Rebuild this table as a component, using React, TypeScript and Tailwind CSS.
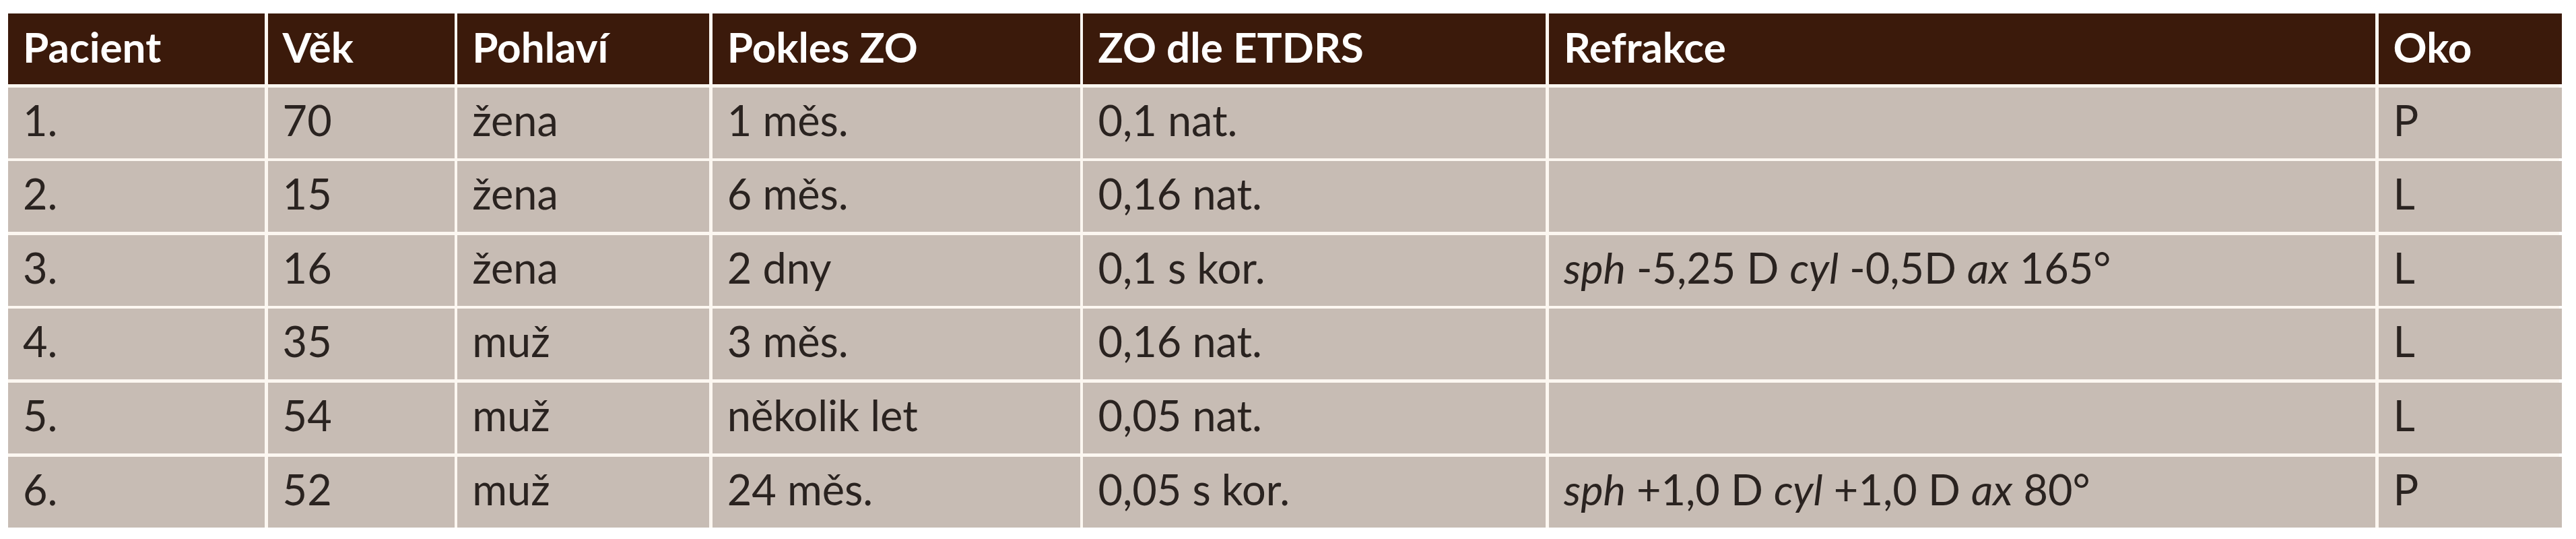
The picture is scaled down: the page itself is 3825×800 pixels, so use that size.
import React from 'react';

type Row = {
  pacient: string;
  vek: string;
  pohlavi: string;
  pokles: string;
  zo: string;
  refrakce: React.ReactNode;
  oko: string;
};

const headers = ['Pacient', 'Věk', 'Pohlaví', 'Pokles ZO', 'ZO dle ETDRS', 'Refrakce', 'Oko'];

const rows: Row[] = [
  { pacient: '1.', vek: '70', pohlavi: 'žena', pokles: '1 měs.', zo: '0,1 nat.', refrakce: '', oko: 'P' },
  { pacient: '2.', vek: '15', pohlavi: 'žena', pokles: '6 měs.', zo: '0,16 nat.', refrakce: '', oko: 'L' },
  {
    pacient: '3.',
    vek: '16',
    pohlavi: 'žena',
    pokles: '2 dny',
    zo: '0,1 s kor.',
    refrakce: (
      <>
        <i>sph</i> -5,25 D <i>cyl</i> -0,5D <i>ax</i> 165°
      </>
    ),
    oko: 'L',
  },
  { pacient: '4.', vek: '35', pohlavi: 'muž', pokles: '3 měs.', zo: '0,16 nat.', refrakce: '', oko: 'L' },
  { pacient: '5.', vek: '54', pohlavi: 'muž', pokles: 'několik let', zo: '0,05 nat.', refrakce: '', oko: 'L' },
  {
    pacient: '6.',
    vek: '52',
    pohlavi: 'muž',
    pokles: '24 měs.',
    zo: '0,05 s kor.',
    refrakce: (
      <>
        <i>sph</i> +1,0 D <i>cyl</i> +1,0 D <i>ax</i> 80°
      </>
    ),
    oko: 'P',
  },
];

const cell = 'h-[105px] pl-[22px] leading-[1.2] whitespace-nowrap';
const bodyCell = `${cell} pt-[10px] text-[63px] bg-[#c7bcb4] text-[#2a2320]`;

export default function App() {
  return (
    <div className="min-h-[800px] w-[3825px] bg-white pt-[20px] pl-[12px] font-['Lato','Noto_Sans',sans-serif]">
      {/* Table */}
      <div className="grid w-[3788px] grid-cols-[381px_277px_374px_546px_687px_1227px_272px] gap-[4.6px] bg-[#fcf7f1]">
        {headers.map((h) => (
          <div key={h} className={`${cell} pt-[12px] text-[62px] bg-[#3b1a0b] font-bold text-white`}>
            {h}
          </div>
        ))}
        {rows.map((r) => (
          <React.Fragment key={r.pacient}>
            <div className={bodyCell}>{r.pacient}</div>
            <div className={bodyCell}>{r.vek}</div>
            <div className={bodyCell}>{r.pohlavi}</div>
            <div className={bodyCell}>{r.pokles}</div>
            <div className={bodyCell}>{r.zo}</div>
            <div className={bodyCell}>{r.refrakce}</div>
            <div className={bodyCell}>{r.oko}</div>
          </React.Fragment>
        ))}
      </div>
    </div>
  );
}
